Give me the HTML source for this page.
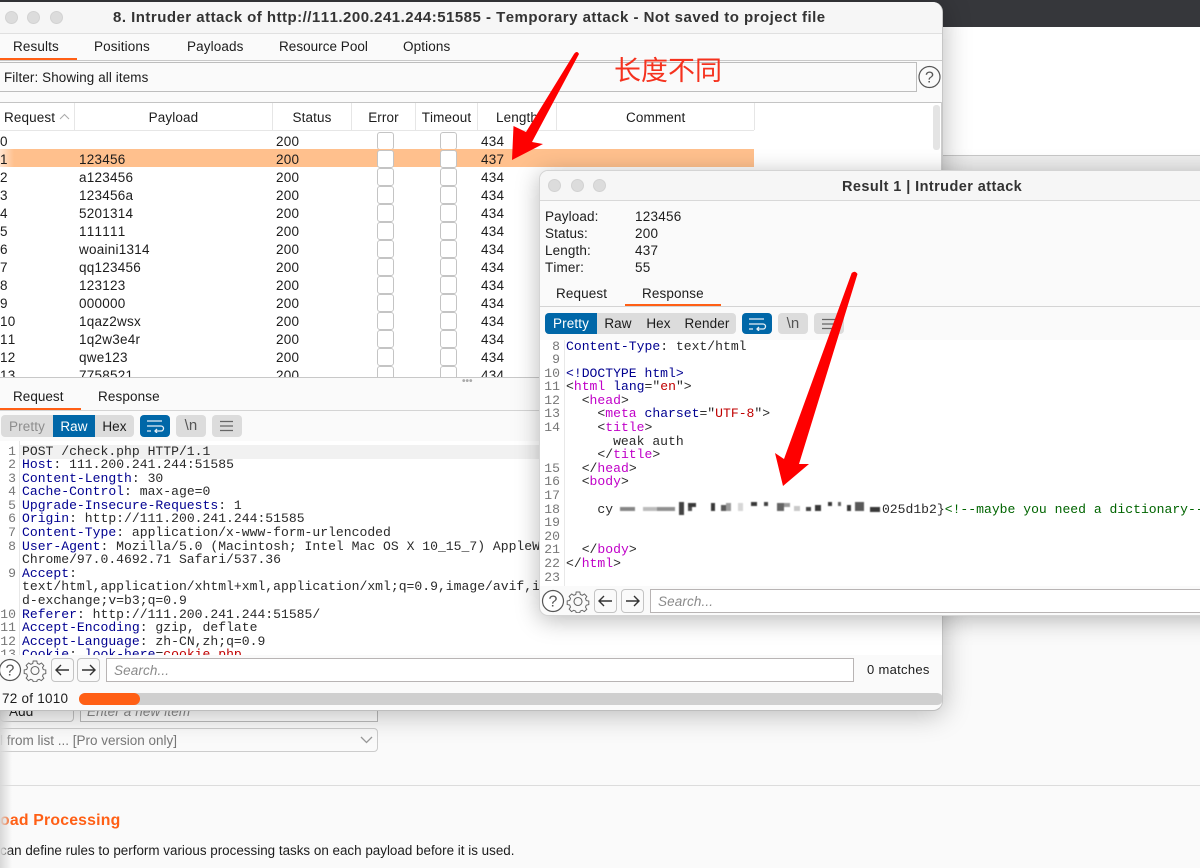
<!DOCTYPE html>
<html><head><meta charset="utf-8"><style>
html,body{margin:0;padding:0}
body{width:1200px;height:868px;overflow:hidden;position:relative;background:#fafafa;font-family:"Liberation Sans","Noto Sans CJK SC",sans-serif;font-size:13.5px;color:#1c1c1c;font-kerning:none;letter-spacing:.12px}
div,span.a{box-sizing:border-box}
.a{position:absolute;white-space:nowrap}
.win{position:absolute;background:#fafafa;overflow:hidden}
.dot{position:absolute;width:13px;height:13px;border-radius:50%;background:#dcdcdc;border:1px solid #d2d2d2}
.t{position:absolute;white-space:pre;line-height:16px}
.c{position:absolute;white-space:pre;font-family:"Liberation Mono",monospace;font-size:13.08px;line-height:13.6px;color:#2a2a2a;letter-spacing:0}
.n{position:absolute;white-space:pre;font-family:"Liberation Mono",monospace;font-size:13.08px;line-height:13.6px;color:#777;text-align:right;letter-spacing:0}
.k{color:#000090}.v{color:#c000c8}.r{color:#c00000}.g{color:#006400}
.cb{position:absolute;width:15px;height:16px;background:#fff;border:1px solid #c4c4c4;border-radius:3px}
.row{position:absolute;left:0;width:754px;height:18px}
.row .t{top:3px;letter-spacing:.25px}
.th{position:absolute;top:103px;height:27px;border-right:1px solid #e6e6e6;text-align:center;line-height:29px}
.btn{position:absolute;border-radius:4px;text-align:center;font-size:13.5px}
.ico{position:absolute;background:#dcdcdc;border-radius:4px;height:22px;width:30px;color:#555;text-align:center;line-height:22px;font-size:15px}
.nav{position:absolute;width:23px;height:24px;border:1px solid #c4c4c4;border-radius:4px;background:#fafafa}
.search{position:absolute;background:#fff;border:1px solid #b8b4b4;font-style:italic;color:#8a8a8a;line-height:24px;padding-left:7px;font-size:13.5px}
</style></head><body>

<!-- page background -->
<div class="a" style="left:0;top:0;width:1200px;height:27px;background:#36373b"></div>
<div class="a" style="left:0;top:27px;width:1200px;height:128px;background:#fff"></div>
<div class="a" style="left:943px;top:155px;width:257px;height:1px;background:#c8c8c8"></div>
<div class="a" style="left:943px;top:156px;width:257px;height:14px;background:#ededed"></div>

<!-- below-window page content -->
<div class="a" style="left:0;top:700px;width:74px;height:22px;border:1px solid #c4c4c4;border-radius:4px;background:#fafafa"></div>
<div class="a" style="left:9px;top:704px;line-height:16px;color:#222">Add</div>
<div class="a" style="left:80px;top:700px;width:298px;height:22px;border:1px solid #bbb;background:#fff"></div>
<div class="a" style="left:87px;top:704px;line-height:16px;font-style:italic;color:#8a8a8a">Enter a new item</div>
<div class="a" style="left:-10px;top:728px;width:388px;height:24px;border:1px solid #ccc;border-radius:4px;background:#fafafa"></div>
<div class="a" style="left:0;top:733px;line-height:16px;color:#777;letter-spacing:0">l from list ... [Pro version only]</div>
<svg class="a" style="left:360px;top:735px" width="14" height="10"><path d="M1 2l5.500 5.500L12 2" fill="none" stroke="#999" stroke-width="1.300"/></svg>
<div class="a" style="left:0;top:785px;width:1200px;height:1px;background:#dcdcdc"></div>
<div class="a" style="left:0;top:811px;font-size:15.8px;line-height:20px;font-weight:bold;color:#ff5f15;letter-spacing:.2px">oad Processing</div>
<div class="a" style="left:0;top:843px;line-height:16px;font-size:13.4px;color:#1c1c1c;letter-spacing:.01px">can define rules to perform various processing tasks on each payload before it is used.</div>
<div class="a" style="left:0;top:711px;width:12px;height:157px;background:linear-gradient(90deg,#d8d8d8,rgba(250,250,250,0))"></div>

<!-- MAIN WINDOW -->
<div class="win" style="left:-10px;top:2px;width:953px;height:709px;border-radius:10px;border-right:1px solid #c6c6c6;border-bottom:1px solid #bdbdbd;box-shadow:0 3px 28px rgba(0,0,0,.28)">
<div style="position:absolute;left:10px;top:-2px;width:943px;height:709px">
  <div class="a" style="left:0;top:2px;width:943px;height:32px;background:#f6f6f6;border-bottom:1px solid #e0e0e0"></div>
  <div class="dot" style="left:5px;top:11px"></div><div class="dot" style="left:27px;top:11px"></div><div class="dot" style="left:50px;top:11px"></div>
  <div class="t" style="left:113px;top:10px;font-weight:bold;font-size:15px;color:#333;letter-spacing:.48px">8. Intruder attack of http://111.200.241.244:51585 - Temporary attack - Not saved to project file</div>

  <div class="t" style="left:13px;top:39px">Results</div>
  <div class="t" style="left:94px;top:39px">Positions</div>
  <div class="t" style="left:187px;top:39px">Payloads</div>
  <div class="t" style="left:279px;top:39px;letter-spacing:.03px">Resource Pool</div>
  <div class="t" style="left:403px;top:39px">Options</div>
  <div class="a" style="left:0;top:58px;width:77px;height:2px;background:#ff5f15"></div>
  <div class="a" style="left:0;top:60px;width:943px;height:1px;background:#c9c9c9"></div>

  <div class="a" style="left:-2px;top:62px;width:919px;height:30px;background:#fafafa;border:1px solid #bdbdbd"></div>
  <div class="t" style="left:4px;top:70px;font-size:13.4px">Filter: Showing all items</div>
  <svg class="a" style="left:918px;top:65px" width="24" height="24"><circle cx="11.500" cy="12" r="10.500" fill="none" stroke="#555" stroke-width="1.200"/><text x="11.500" y="17.500" font-size="16" font-family="Liberation Sans" text-anchor="middle" fill="#555">?</text></svg>

  <!-- table -->
  <div class="a" style="left:0;top:102px;width:943px;height:276px;background:#fff;border-top:1px solid #c4c4c4;overflow:hidden"></div>
  <div class="a" style="left:941px;top:102px;width:1px;height:276px;background:#ccc"></div>
  <div class="th" style="left:0;width:75px;text-align:left;padding-left:4px">Request <svg width="11" height="7" style="vertical-align:2px"><path d="M1 6l4.500-4.500L10 6" fill="none" stroke="#aaa"/></svg></div>
  <div class="th" style="left:75px;width:198px">Payload</div>
  <div class="th" style="left:273px;width:79px">Status</div>
  <div class="th" style="left:352px;width:64px">Error</div>
  <div class="th" style="left:416px;width:62px">Timeout</div>
  <div class="th" style="left:478px;width:79px">Length</div>
  <div class="th" style="left:557px;width:198px;text-align:left;padding-left:69px">Comment</div>
  <div class="a" style="left:0;top:130px;width:754px;height:1px;background:#e6e6e6"></div>
  <div class="a" style="left:933px;top:105px;width:7px;height:45px;background:#e4e4e4;border-radius:3px"></div>

  <div class="row" style="top:131px"><span class="t" style="left:0">0</span><span class="t" style="left:276px">200</span><span class="cb" style="left:377px;top:1px"></span><span class="cb" style="left:440px;top:1px"></span><span class="t" style="left:481px">434</span></div>
  <div class="row" style="top:149px;background:linear-gradient(90deg,#ffe4cf,#ffc08d 14px)"><span class="t" style="left:0">1</span><span class="t" style="left:79px">123456</span><span class="t" style="left:276px">200</span><span class="cb" style="left:377px;top:1px"></span><span class="cb" style="left:440px;top:1px"></span><span class="t" style="left:481px">437</span></div>
  <div class="row" style="top:167px"><span class="t" style="left:0">2</span><span class="t" style="left:79px">a123456</span><span class="t" style="left:276px">200</span><span class="cb" style="left:377px;top:1px"></span><span class="cb" style="left:440px;top:1px"></span><span class="t" style="left:481px">434</span></div>
  <div class="row" style="top:185px"><span class="t" style="left:0">3</span><span class="t" style="left:79px">123456a</span><span class="t" style="left:276px">200</span><span class="cb" style="left:377px;top:1px"></span><span class="cb" style="left:440px;top:1px"></span><span class="t" style="left:481px">434</span></div>
  <div class="row" style="top:203px"><span class="t" style="left:0">4</span><span class="t" style="left:79px">5201314</span><span class="t" style="left:276px">200</span><span class="cb" style="left:377px;top:1px"></span><span class="cb" style="left:440px;top:1px"></span><span class="t" style="left:481px">434</span></div>
  <div class="row" style="top:221px"><span class="t" style="left:0">5</span><span class="t" style="left:79px">111111</span><span class="t" style="left:276px">200</span><span class="cb" style="left:377px;top:1px"></span><span class="cb" style="left:440px;top:1px"></span><span class="t" style="left:481px">434</span></div>
  <div class="row" style="top:239px"><span class="t" style="left:0">6</span><span class="t" style="left:79px">woaini1314</span><span class="t" style="left:276px">200</span><span class="cb" style="left:377px;top:1px"></span><span class="cb" style="left:440px;top:1px"></span><span class="t" style="left:481px">434</span></div>
  <div class="row" style="top:257px"><span class="t" style="left:0">7</span><span class="t" style="left:79px">qq123456</span><span class="t" style="left:276px">200</span><span class="cb" style="left:377px;top:1px"></span><span class="cb" style="left:440px;top:1px"></span><span class="t" style="left:481px">434</span></div>
  <div class="row" style="top:275px"><span class="t" style="left:0">8</span><span class="t" style="left:79px">123123</span><span class="t" style="left:276px">200</span><span class="cb" style="left:377px;top:1px"></span><span class="cb" style="left:440px;top:1px"></span><span class="t" style="left:481px">434</span></div>
  <div class="row" style="top:293px"><span class="t" style="left:0">9</span><span class="t" style="left:79px">000000</span><span class="t" style="left:276px">200</span><span class="cb" style="left:377px;top:1px"></span><span class="cb" style="left:440px;top:1px"></span><span class="t" style="left:481px">434</span></div>
  <div class="row" style="top:311px"><span class="t" style="left:0">10</span><span class="t" style="left:79px">1qaz2wsx</span><span class="t" style="left:276px">200</span><span class="cb" style="left:377px;top:1px"></span><span class="cb" style="left:440px;top:1px"></span><span class="t" style="left:481px">434</span></div>
  <div class="row" style="top:329px"><span class="t" style="left:0">11</span><span class="t" style="left:79px">1q2w3e4r</span><span class="t" style="left:276px">200</span><span class="cb" style="left:377px;top:1px"></span><span class="cb" style="left:440px;top:1px"></span><span class="t" style="left:481px">434</span></div>
  <div class="row" style="top:347px"><span class="t" style="left:0">12</span><span class="t" style="left:79px">qwe123</span><span class="t" style="left:276px">200</span><span class="cb" style="left:377px;top:1px"></span><span class="cb" style="left:440px;top:1px"></span><span class="t" style="left:481px">434</span></div>
  <div class="row" style="top:365px;height:12px;overflow:hidden"><span class="t" style="left:0">13</span><span class="t" style="left:79px">7758521</span><span class="t" style="left:276px">200</span><span class="cb" style="left:377px;top:1px"></span><span class="cb" style="left:440px;top:1px"></span><span class="t" style="left:481px">434</span></div>

  <!-- divider & lower pane -->
  <div class="a" style="left:0;top:377px;width:943px;height:1px;background:#c8c8c8"></div>
  <div class="a" style="left:0;top:378px;width:943px;height:330px;background:#fafafa"></div>
  <div class="a" style="left:462px;top:379px;color:#aaa;font-size:10px;line-height:6px;letter-spacing:0;font-weight:bold">•••</div>
  <div class="t" style="left:13px;top:389px;letter-spacing:.03px">Request</div>
  <div class="t" style="left:98px;top:389px">Response</div>
  <div class="a" style="left:0;top:408px;width:81px;height:2px;background:#ff5f15"></div>
  <div class="a" style="left:0;top:410px;width:943px;height:1px;background:#d4d4d4"></div>

  <div class="a" style="left:1px;top:415px;width:133px;height:22px;background:#dcdcdc;border-radius:4px"></div>
  <div class="btn" style="left:1px;top:415px;width:52px;height:22px;line-height:24px;color:#8d8d8d">Pretty</div>
  <div class="btn" style="left:53px;top:415px;width:42px;height:22px;line-height:24px;background:#0067a8;color:#fff;border-radius:0">Raw</div>
  <div class="btn" style="left:95px;top:415px;width:39px;height:22px;line-height:24px">Hex</div>
  <div class="ico" style="left:140px;top:415px;background:#0067a8"><svg width="20" height="14" style="margin-top:4px;display:block;margin-left:5px"><path d="M2 2h15M2 7h14a2.500 2.500 0 0 1 0 5h-6M12 10l-2 2 2 2M2 12h4" fill="none" stroke="#e8f0f6" stroke-width="1.300"/></svg></div>
  <div class="ico" style="left:176px;top:415px">\n</div>
  <div class="ico" style="left:212px;top:415px"><svg width="16" height="12" style="margin-top:5px;display:block;margin-left:7px"><path d="M1 1.500h13M1 6h13M1 10.500h13" fill="none" stroke="#666" stroke-width="1.300"/></svg></div>

  <!-- request code -->
  <div class="a" style="left:0;top:441px;width:943px;height:214px;background:#fff;overflow:hidden">
    <div class="a" style="left:19px;top:4px;width:924px;height:14px;background:#f1f1f1"></div>
    <div class="a" style="left:19px;top:0;width:1px;height:214px;background:#e8e8e8"></div>
    <div class="n" style="left:0;top:3.500px;width:16px"> 1
 2
 3
 4
 5
 6
 7
 8

 9


10
11
12
13</div>
    <div class="c" style="left:22px;top:3.500px">POST /check.php HTTP/1.1
<span class="k">Host</span>: 111.200.241.244:51585
<span class="k">Content-Length</span>: 30
<span class="k">Cache-Control</span>: max-age=0
<span class="k">Upgrade-Insecure-Requests</span>: 1
<span class="k">Origin</span>: http://111.200.241.244:51585
<span class="k">Content-Type</span>: application/x-www-form-urlencoded
<span class="k">User-Agent</span>: Mozilla/5.0 (Macintosh; Intel Mac OS X 10_15_7) AppleWebKit/537.36
Chrome/97.0.4692.71 Safari/537.36
<span class="k">Accept</span>:
text/html,application/xhtml+xml,application/xml;q=0.9,image/avif,image/webp
d-exchange;v=b3;q=0.9
<span class="k">Referer</span>: http://111.200.241.244:51585/
<span class="k">Accept-Encoding</span>: gzip, deflate
<span class="k">Accept-Language</span>: zh-CN,zh;q=0.9
<span class="k">Cookie</span>: <span class="k">look-here</span>=<span class="r">cookie.php</span></div>
  </div>

  <!-- search bar -->
  <svg class="a" style="left:-1px;top:658px" width="24" height="24"><circle cx="11" cy="12" r="10.500" fill="#fff" stroke="#555" stroke-width="1.200"/><text x="11" y="17.500" font-size="16" font-family="Liberation Sans" text-anchor="middle" fill="#555">?</text></svg>
  <svg class="a" style="left:23px;top:658px" width="24" height="24" viewBox="0 0 24 24"><path d="M10 2h4l.6 2.800 2.200.9 2.400-1.500 2.600 2.800-1.500 2.300.9 2.200 2.800.5v4l-2.800.6-.9 2.200 1.500 2.400-2.800 2.600-2.300-1.500-2.200.9-.5 1.800h-4l-.6-1.800-2.200-.9-2.400 1.500-2.600-2.800 1.500-2.300-.9-2.200-2.800-.6v-4l2.800-.5.9-2.200-1.500-2.400 2.800-2.600 2.300 1.500 2.200-.9z" transform="translate(1.200 1.200) scale(.9)" fill="none" stroke="#666" stroke-width="1.100"/><circle cx="12" cy="12.500" r="4" fill="none" stroke="#666" stroke-width="1.100"/></svg>
  <div class="nav" style="left:51px;top:658px"><svg width="21" height="22"><path d="M17 11H4M9 6l-5 5 5 5" fill="none" stroke="#333" stroke-width="1.400"/></svg></div>
  <div class="nav" style="left:77px;top:658px"><svg width="21" height="22"><path d="M4 11h13M12 6l5 5-5 5" fill="none" stroke="#333" stroke-width="1.400"/></svg></div>
  <div class="search" style="left:106px;top:658px;width:748px;height:24px">Search...</div>
  <div class="t" style="left:867px;top:662px;font-size:13px;color:#1c1c1c;letter-spacing:.3px">0 matches</div>

  <!-- progress -->
  <div class="t" style="left:2px;top:691px;color:#1c1c1c;letter-spacing:.25px">72 of 1010</div>
  <div class="a" style="left:79px;top:693px;width:864px;height:12px;background:#cfcfcf;border-radius:6px"></div>
  <div class="a" style="left:79px;top:693px;width:61px;height:12px;background:#ff5f15;border-radius:6px"></div>
</div>
</div>

<!-- annotation text -->
<div class="a" style="left:614px;top:53px;font-size:27px;line-height:32px;color:#f5321e;font-family:'Noto Sans CJK SC',sans-serif;font-weight:400;letter-spacing:0">长度不同</div>

<!-- arrow 1 -->
<svg class="a" style="left:0;top:0;z-index:5" width="1200" height="868"><path d="M574 54Q577 50 579 54L532 142 543 144 512 160 513.500 126 526 132Z" fill="#fe0000"/></svg>

<!-- RESULT WINDOW -->
<div class="win" style="left:539px;top:170px;width:700px;height:446px;border-radius:9px;box-shadow:0 4px 24px rgba(0,0,0,.28);border:1px solid #d4d4d4;overflow:hidden">
<div style="position:absolute;left:-540px;top:-171px;width:1240px;height:446px">
  <div class="a" style="left:540px;top:171px;width:660px;height:30px;background:#f6f6f6;border-bottom:1px solid #d8d8d8"></div>
  <div class="dot" style="left:548px;top:179px"></div><div class="dot" style="left:571px;top:179px"></div><div class="dot" style="left:593px;top:179px"></div>
  <div class="t" style="left:842px;top:179px;font-weight:bold;font-size:14.5px;color:#333;letter-spacing:.42px">Result 1 | Intruder attack</div>
  <div class="t" style="left:545px;top:209px">Payload:</div><div class="t" style="left:635px;top:209px;letter-spacing:.25px">123456</div>
  <div class="t" style="left:545px;top:226px">Status:</div><div class="t" style="left:635px;top:226px;letter-spacing:.25px">200</div>
  <div class="t" style="left:545px;top:243px">Length:</div><div class="t" style="left:635px;top:243px;letter-spacing:.25px">437</div>
  <div class="t" style="left:545px;top:260px">Timer:</div><div class="t" style="left:635px;top:260px;letter-spacing:.25px">55</div>
  <div class="t" style="left:556px;top:286px">Request</div>
  <div class="t" style="left:642px;top:286px">Response</div>
  <div class="a" style="left:540px;top:306px;width:660px;height:1px;background:#d4d4d4"></div>
  <div class="a" style="left:625px;top:304px;width:96px;height:2px;background:#ff5f15"></div>

  <div class="a" style="left:545px;top:313px;width:191px;height:21px;background:#dcdcdc;border-radius:4px"></div>
  <div class="btn" style="left:545px;top:313px;width:52px;height:21px;line-height:21px;background:#0067a8;color:#fff;border-radius:4px 0 0 4px">Pretty</div>
  <div class="btn" style="left:597px;top:313px;width:42px;height:21px;line-height:21px">Raw</div>
  <div class="btn" style="left:639px;top:313px;width:39px;height:21px;line-height:21px">Hex</div>
  <div class="btn" style="left:678px;top:313px;width:58px;height:21px;line-height:21px">Render</div>
  <div class="ico" style="left:742px;top:313px;height:21px;background:#0067a8;line-height:21px"><svg width="20" height="14" style="margin-top:4px;display:block;margin-left:5px"><path d="M2 2h15M2 7h14a2.500 2.500 0 0 1 0 5h-6M12 10l-2 2 2 2M2 12h4" fill="none" stroke="#e8f0f6" stroke-width="1.300"/></svg></div>
  <div class="ico" style="left:778px;top:313px;height:21px;line-height:21px">\n</div>
  <div class="ico" style="left:814px;top:313px;height:21px"><svg width="16" height="12" style="margin-top:5px;display:block;margin-left:7px"><path d="M1 1.500h13M1 6h13M1 10.500h13" fill="none" stroke="#666" stroke-width="1.300"/></svg></div>

  <div class="a" style="left:540px;top:340px;width:660px;height:246px;background:#fff;overflow:hidden">
    <div class="a" style="left:24px;top:0;width:1px;height:246px;background:#e8e8e8"></div>
    <div class="n" style="left:2px;top:-.5px;width:18px"> 8
 9
10
11
12
13
14


15
16
17
18
19
20
21
22
23</div>
    <div class="c" style="left:26px;top:-.5px"><span class="k">Content-Type</span>: text/html

<span class="k">&lt;!DOCTYPE html&gt;</span>
&lt;<span class="v">html</span> <span class="k">lang</span>="<span class="r">en</span>"&gt;
  &lt;<span class="v">head</span>&gt;
    &lt;<span class="v">meta</span> <span class="k">charset</span>="<span class="r">UTF-8</span>"&gt;
    &lt;<span class="v">title</span>&gt;
      weak auth
    &lt;/<span class="v">title</span>&gt;
  &lt;/<span class="v">head</span>&gt;
  &lt;<span class="v">body</span>&gt;

    cy<span style="color:#fff;padding-left:2px">fhub{xxxxxxxxxxxxxxxxxxxxxxxxxxxxx</span>025d1b2}<span class="g">&lt;!--maybe you need a dictionary--&gt;</span>


  &lt;/<span class="v">body</span>&gt;
&lt;/<span class="v">html</span>&gt;</div>
    <!-- pixelated redaction -->
    <svg class="a" style="left:78px;top:162px;filter:blur(.5px)" width="270" height="16"><g fill="#222"><rect x="2" y="5" width="15" height="4" opacity=".55"/><rect x="25" y="5" width="14" height="4" opacity=".3"/><rect x="39" y="5" width="18" height="4" opacity=".5"/><rect x="61" y="0" width="5" height="13" opacity=".85"/><rect x="70" y="1" width="8" height="4" opacity=".9"/><rect x="70" y="5" width="4" height="4" opacity=".8"/><rect x="93" y="1" width="4" height="8" opacity=".9"/><rect x="103" y="3" width="5" height="6" opacity=".75"/><rect x="108" y="1" width="5" height="8" opacity=".45"/><rect x="120" y="1" width="5" height="8" opacity=".18"/><rect x="133" y="0" width="6" height="4" opacity=".9"/><rect x="146" y="0" width="4" height="4" opacity=".85"/><rect x="159" y="1" width="7" height="8" opacity=".7"/><rect x="166" y="1" width="6" height="4" opacity=".45"/><rect x="176" y="4" width="6" height="5" opacity=".25"/><rect x="188" y="5" width="5" height="4" opacity=".85"/><rect x="197" y="3" width="6" height="6" opacity=".9"/><rect x="210" y="0" width="4" height="4" opacity=".9"/><rect x="220" y="0" width="3" height="4" opacity=".7"/><rect x="229" y="3" width="4" height="6" opacity=".9"/><rect x="237" y="0" width="9" height="9" opacity=".75"/><rect x="252" y="5" width="10" height="5" opacity=".9"/></g></svg>
  </div>

  <svg class="a" style="left:541px;top:589px" width="24" height="24"><circle cx="12" cy="12" r="10.500" fill="#fff" stroke="#555" stroke-width="1.200"/><text x="12" y="17.500" font-size="16" font-family="Liberation Sans" text-anchor="middle" fill="#555">?</text></svg>
  <svg class="a" style="left:566px;top:589px" width="24" height="24" viewBox="0 0 24 24"><path d="M10 2h4l.6 2.800 2.200.9 2.400-1.500 2.600 2.800-1.500 2.300.9 2.200 2.800.5v4l-2.800.6-.9 2.200 1.500 2.400-2.800 2.600-2.300-1.500-2.200.9-.5 1.800h-4l-.6-1.800-2.200-.9-2.400 1.500-2.600-2.800 1.500-2.300-.9-2.200-2.800-.6v-4l2.800-.5.9-2.200-1.500-2.400 2.800-2.600 2.300 1.500 2.200-.9z" transform="translate(1.200 1.200) scale(.9)" fill="none" stroke="#666" stroke-width="1.100"/><circle cx="12" cy="12.500" r="4" fill="none" stroke="#666" stroke-width="1.100"/></svg>
  <div class="nav" style="left:594px;top:589px"><svg width="21" height="22"><path d="M17 11H4M9 6l-5 5 5 5" fill="none" stroke="#333" stroke-width="1.400"/></svg></div>
  <div class="nav" style="left:621px;top:589px"><svg width="21" height="22"><path d="M4 11h13M12 6l5 5-5 5" fill="none" stroke="#333" stroke-width="1.400"/></svg></div>
  <div class="search" style="left:650px;top:589px;width:600px;height:24px">Search...</div>
</div>
</div>

<!-- arrow 2 -->
<svg class="a" style="left:0;top:0;z-index:6" width="1200" height="868"><path d="M851.700 273Q855 270 857.500 274L799 464 809 464 783 486 775 453 784 459Z" fill="#fe0000"/></svg>
</body></html>
